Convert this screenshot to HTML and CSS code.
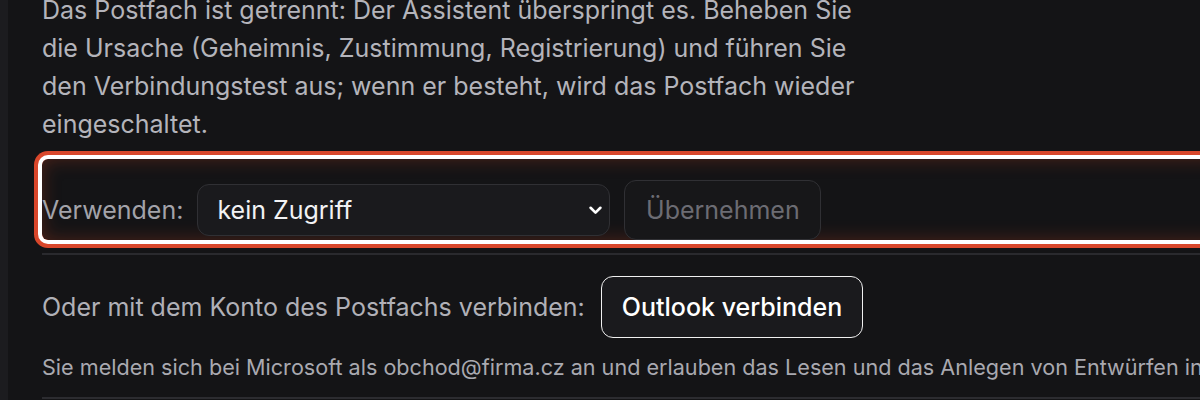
FILE: index.html
```html
<!DOCTYPE html>
<html lang="de">
<head>
<meta charset="utf-8">
<title>Postfach</title>
<link rel="stylesheet" href="styles.css">
</head>
<body>
<div class="page">
  <aside class="rail"></aside>
  <main class="main">
    <p class="intro">Das Postfach ist getrennt: Der Assistent überspringt es. Beheben Sie die Ursache (Geheimnis, Zustimmung, Registrierung) und führen Sie den Verbindungstest aus; wenn er besteht, wird das Postfach wieder eingeschaltet.</p>
    <div class="use-row">
      <label class="use-label" for="use">Verwenden:</label>
      <div class="select-wrap">
        <select id="use" class="select">
          <option>kein Zugriff</option>
        </select>
        <svg class="chev" viewBox="0 0 12 8" width="13" height="9" aria-hidden="true"><path d="M1.5 1.5 6 6l4.5-4.5" fill="none" stroke="#fff" stroke-width="2.4" stroke-linecap="round" stroke-linejoin="round"/></svg>
      </div>
      <button class="btn-apply" disabled>Übernehmen</button>
    </div>
    <div class="divider"></div>
    <div class="connect-row">
      <span class="connect-label">Oder mit dem Konto des Postfachs verbinden:</span>
      <button class="btn-outlook">Outlook verbinden</button>
    </div>
    <p class="note">Sie melden sich bei Microsoft als obchod@firma.cz an und erlauben das Lesen und das Anlegen von Entwürfen in diesem Postfach.</p>
    <div class="divider bottom"></div>
  </main>
</div>
</body>
</html>
```

FILE: styles.css
```css
html, body {
  margin: 0;
  padding: 0;
  height: 100%;
  overflow: hidden;
  background: #141416;
}

body {
  font-family: Inter, "Noto Sans", "Liberation Sans", sans-serif;
  color: #b4b4bb;
}

.page {
  display: flex;
  min-height: 100%;
}

.rail {
  width: 8px;
  flex: 0 0 8px;
  background: #1c1c1f;
}

.main {
  flex: 0 0 1400px;
  padding-left: 34px;
  margin-top: -9px;
}

.intro {
  margin: 0;
  max-width: 830px;
  font-size: 25px;
  line-height: 38px;
  color: #b4b4bb;
}

.use-row {
  margin-top: 16px;
  padding-top: 21px;
  display: flex;
  align-items: center;
  gap: 14px;
  border-radius: 6px;
  box-shadow: 0 0 0 4px #ffffff, 0 0 0 8px #d9472b, inset 0 0 18px rgba(190, 60, 30, 0.35);
}

.use-label {
  font-size: 25px;
  color: #a3a3aa;
}

.select-wrap {
  position: relative;
  width: 413px;
  height: 52px;
}

.select {
  appearance: none;
  -webkit-appearance: none;
  width: 100%;
  height: 100%;
  box-sizing: border-box;
  padding: 0 40px 0 19px;
  font-family: inherit;
  font-size: 25px;
  color: #f2f2f4;
  background: #1a1a1d;
  border: 1px solid #303034;
  border-radius: 12px;
}

.chev {
  position: absolute;
  right: 8px;
  top: 22px;
}

.btn-apply {
  height: 60px;
  width: 197px;
  box-sizing: border-box;
  font-family: inherit;
  font-size: 25px;
  color: #6c6c73;
  background: #171719;
  border: 1px solid #303034;
  border-radius: 12px;
}

.divider {
  margin-top: 13px;
  height: 2px;
  background: #2a2a2e;
}

.connect-row {
  margin-top: 21px;
  display: flex;
  align-items: center;
  gap: 16px;
}

.connect-label {
  font-size: 25px;
  color: #b0b0b7;
}

.btn-outlook {
  height: 62px;
  padding: 0 20px;
  box-sizing: border-box;
  font-family: inherit;
  font-size: 25px;
  font-weight: 500;
  color: #ffffff;
  background: #1a1a1d;
  border: 1.5px solid #f0f0f0;
  border-radius: 12px;
}

.note {
  margin: 15px 0 0;
  font-size: 21.6px;
  line-height: 28px;
  color: #a9a9b0;
  white-space: nowrap;
}

.divider.bottom {
  margin-top: 16px;
  background: #2c2c30;
}
```
